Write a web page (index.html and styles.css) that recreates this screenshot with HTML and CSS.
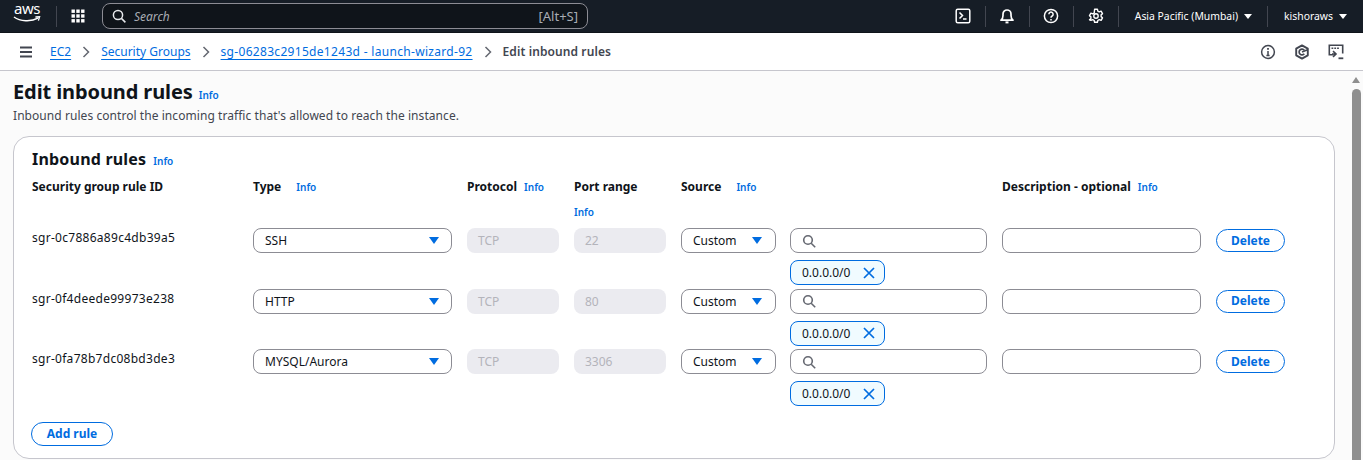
FILE: index.html
```html
<!DOCTYPE html>
<html lang="en">
<head>
<meta charset="utf-8">
<title>Edit inbound rules</title>
<link rel="stylesheet" href="styles.css">
</head>
<body>
<header class="topbar">
  <div class="logo">
    <span class="logo-text">aws</span>
    <svg class="logo-smile" width="28" height="7" viewBox="0 0 28 7"><path d="M1 1C7 5.400 18 6 25 2.200" fill="none" stroke="#fff" stroke-width="1.500"/><path d="M22.400 1l4.200-.2-1.200 3.800" fill="none" stroke="#fff" stroke-width="1.300"/></svg>
  </div>
  <span class="tsep tsep-logo"></span>
  <svg class="grid-icon" width="14" height="14" viewBox="0 0 14 14" fill="#fff"><rect width="3.400" height="3.400" x="0.500" y="0.500"/><rect width="3.400" height="3.400" x="5.300" y="0.500"/><rect width="3.400" height="3.400" x="10.100" y="0.500"/><rect width="3.400" height="3.400" x="0.500" y="5.300"/><rect width="3.400" height="3.400" x="5.300" y="5.300"/><rect width="3.400" height="3.400" x="10.100" y="5.300"/><rect width="3.400" height="3.400" x="0.500" y="10.100"/><rect width="3.400" height="3.400" x="5.300" y="10.100"/><rect width="3.400" height="3.400" x="10.100" y="10.100"/></svg>
  <div class="searchbar">
    <svg width="14" height="14" viewBox="0 0 14 14" fill="none" stroke="#e8eaed" stroke-width="1.500"><circle cx="6" cy="6" r="4.600"/><path d="M9.400 9.400l4 4"/></svg>
    <span class="search-ph">Search</span>
    <span class="search-key">[Alt+S]</span>
  </div>
  <div class="top-right">
    <svg class="ticon ti-cs" width="16" height="16" viewBox="0 0 16 16" fill="none" stroke="#fff" stroke-width="1.500"><rect x="1.200" y="1.200" width="13.600" height="13.600" rx="1.500"/><path d="M4.500 4.500l3 3-3 3M8 11h3.500"/></svg>
    <span class="tsep"></span>
    <svg class="ticon" width="16" height="16" viewBox="0 0 16 16" fill="none" stroke="#fff" stroke-width="1.700"><path d="M2 12.200c1.500-1.200 2-2.500 2-4.700V6a4 4 0 0 1 8 0v1.500c0 2.200.5 3.500 2 4.700z" stroke-linejoin="round"/><path d="M6.500 14.400h3" stroke-width="2"/></svg>
    <span class="tsep"></span>
    <svg class="ticon" width="16" height="16" viewBox="0 0 16 16" fill="none" stroke="#fff" stroke-width="1.500"><circle cx="8" cy="8" r="6.600"/><path d="M5.900 6.200a2.100 2.100 0 1 1 3.200 1.800c-.7.4-1.100.9-1.100 1.800"/><path d="M8 11v1.400"/></svg>
    <span class="tsep"></span>
    <svg class="ticon ti-gear" width="16" height="16" viewBox="0 0 16 16" fill="none" stroke="#fff" stroke-width="1.400"><path d="M6.600 1.200h2.800l.4 1.900 1.500.8 1.800-.7 1.400 2.500-1.400 1.200v1.700l1.400 1.200-1.400 2.500-1.800-.7-1.500.9-.4 1.800H6.600l-.4-1.800-1.500-.9-1.800.7L1.500 11.800l1.400-1.200V8.900L1.500 7.700l1.400-2.500 1.800.7 1.500-.8z" stroke-linejoin="round"/><circle cx="8" cy="8" r="2.200"/></svg>
    <span class="tsep"></span>
    <span class="top-menu top-region">Asia Pacific (Mumbai)<i class="caret-white"></i></span>
    <span class="tsep"></span>
    <span class="top-menu top-user">kishoraws<i class="caret-white"></i></span>
  </div>
</header>

<nav class="crumbbar">
  <svg class="menu-icon" width="14" height="12" viewBox="0 0 14 12" stroke="#424650" stroke-width="2"><path d="M1 1.500h12M1 6h12M1 10.500h12"/></svg>
  <a class="crumb crumb-first">EC2</a>
  <svg class="chev" width="8" height="12" viewBox="0 0 8 12" fill="none" stroke="#656871" stroke-width="1.500"><path d="M1.500 1l5 5-5 5"/></svg>
  <a class="crumb">Security Groups</a>
  <svg class="chev" width="8" height="12" viewBox="0 0 8 12" fill="none" stroke="#656871" stroke-width="1.500"><path d="M1.500 1l5 5-5 5"/></svg>
  <a class="crumb crumb-sg">sg-06283c2915de1243d - launch-wizard-92</a>
  <svg class="chev" width="8" height="12" viewBox="0 0 8 12" fill="none" stroke="#656871" stroke-width="1.500"><path d="M1.500 1l5 5-5 5"/></svg>
  <span class="crumb-current">Edit inbound rules</span>
  <div class="crumb-tools">
    <svg width="16" height="16" viewBox="0 0 16 16" fill="none" stroke="#424650" stroke-width="1.500"><circle cx="8" cy="8" r="6.400"/><path d="M8 7v4.600M6.400 11.600h3.200"/><path d="M8 4v1.800" stroke-width="1.800"/></svg>
    <svg width="16" height="16" viewBox="0 0 16 16" fill="none" stroke="#424650" stroke-width="1.900"><path d="M8 1.400l5.800 3.300v6.600L8 14.600l-5.800-3.300V4.700z" stroke-linejoin="round"/><path d="M10.300 6.200a2.900 2.900 0 1 0 0 3.600" stroke-width="1.700"/><path d="M8 8l5.600-2.200" stroke-width="1.500"/></svg>
    <svg width="16" height="16" viewBox="0 0 16 16" fill="none" stroke="#424650" stroke-width="1.600"><path d="M5.500 10.800H1.300V1.300h13.400v8.200"/><path d="M3.500 4.300h1.800M6.300 4.300h1.800M9.100 4.300h1.800" stroke-width="1.600"/><path d="M5 7.200l3 2.800-3 2.800M4 10h3.500" stroke-width="1.600"/><path d="M10.500 14.300h4.800" stroke-width="1.800"/></svg>
  </div>
</nav>

<div class="body-row">
  <main class="content">
    <div class="page-title">
      <h1>Edit inbound rules</h1>
      <a class="info info-h1">Info</a>
    </div>
    <p class="page-desc">Inbound rules control the incoming traffic that's allowed to reach the instance.</p>

    <section class="card">
      <div class="card-title"><h2>Inbound rules</h2><a class="info">Info</a></div>

      <div class="rule-grid head-grid">
        <div class="col-head">Security group rule ID</div>
        <div class="col-head">Type<a class="info info-wide">Info</a></div>
        <div class="col-head">Protocol<a class="info">Info</a></div>
        <div class="col-head col-port">Port range<a class="info">Info</a></div>
        <div class="col-head">Source<a class="info info-wide">Info</a></div>
        <div></div>
        <div class="col-head">Description - optional<a class="info">Info</a></div>
        <div></div>
      </div>

      <div class="rule-grid rule-row">
        <div class="rule-id">sgr-0c7886a89c4db39a5</div>
        <div class="select"><span>SSH</span><i class="caret-blue"></i></div>
        <div class="field-off">TCP</div>
        <div class="field-off">22</div>
        <div class="select select-src"><span>Custom</span><i class="caret-blue"></i></div>
        <div class="src-col">
          <div class="field-search"><svg width="14" height="14" viewBox="0 0 14 14" fill="none" stroke="#656871" stroke-width="1.600"><circle cx="6" cy="6" r="4.300"/><path d="M9.200 9.200l4 4"/></svg></div>
          <div class="token">0.0.0.0/0<svg width="12" height="12" viewBox="0 0 12 12" fill="none" stroke="#006ce0" stroke-width="1.700"><path d="M1 1l10 10M11 1L1 11"/></svg></div>
        </div>
        <div class="field-text"></div>
        <button class="btn btn-del">Delete</button>
      </div>

      <div class="rule-grid rule-row">
        <div class="rule-id">sgr-0f4deede99973e238</div>
        <div class="select"><span>HTTP</span><i class="caret-blue"></i></div>
        <div class="field-off">TCP</div>
        <div class="field-off">80</div>
        <div class="select select-src"><span>Custom</span><i class="caret-blue"></i></div>
        <div class="src-col">
          <div class="field-search"><svg width="14" height="14" viewBox="0 0 14 14" fill="none" stroke="#656871" stroke-width="1.600"><circle cx="6" cy="6" r="4.300"/><path d="M9.200 9.200l4 4"/></svg></div>
          <div class="token">0.0.0.0/0<svg width="12" height="12" viewBox="0 0 12 12" fill="none" stroke="#006ce0" stroke-width="1.700"><path d="M1 1l10 10M11 1L1 11"/></svg></div>
        </div>
        <div class="field-text"></div>
        <button class="btn btn-del">Delete</button>
      </div>

      <div class="rule-grid rule-row">
        <div class="rule-id">sgr-0fa78b7dc08bd3de3</div>
        <div class="select"><span>MYSQL/Aurora</span><i class="caret-blue"></i></div>
        <div class="field-off">TCP</div>
        <div class="field-off">3306</div>
        <div class="select select-src"><span>Custom</span><i class="caret-blue"></i></div>
        <div class="src-col">
          <div class="field-search"><svg width="14" height="14" viewBox="0 0 14 14" fill="none" stroke="#656871" stroke-width="1.600"><circle cx="6" cy="6" r="4.300"/><path d="M9.200 9.200l4 4"/></svg></div>
          <div class="token">0.0.0.0/0<svg width="12" height="12" viewBox="0 0 12 12" fill="none" stroke="#006ce0" stroke-width="1.700"><path d="M1 1l10 10M11 1L1 11"/></svg></div>
        </div>
        <div class="field-text"></div>
        <button class="btn btn-del">Delete</button>
      </div>

      <button class="btn btn-add">Add rule</button>
    </section>
  </main>
  <aside class="scrollbar">
    <i class="scroll-up"></i>
    <i class="scroll-thumb"></i>
  </aside>
</div>
</body>
</html>
```

FILE: styles.css
```css
* { box-sizing: border-box; }
html, body { height: 100%; }
body {
  margin: 0;
  height: 460px;
  overflow: hidden;
  display: flex;
  flex-direction: column;
  background: #fbfbfb;
  color: #0f141a;
  font-family: "Noto Sans", "Open Sans", sans-serif;
  font-size: 12px;
}
a { color: #006ce0; }

/* Top bar */
.topbar {
  flex: none;
  height: 33px;
  background: #161d26;
  border-bottom: 1px solid #0f141a;
  display: flex;
  align-items: center;
  padding-left: 9px;
  color: #fff;
}
.logo { width: 36px; height: 26px; display: flex; flex-direction: column; align-items: center; margin-top: -5px; }
.logo-text { font-size: 15px; line-height: 15px; color: #fff; letter-spacing: -0.400px; }
.logo-smile { margin-top: 0; flex: none; }
.tsep { flex: none; width: 1px; height: 21px; background: #424650; }
.tsep-logo { margin-left: 11px; }
.grid-icon { margin-left: 14px; flex: none; }
.searchbar {
  margin-left: 17px;
  width: 486px;
  height: 26px;
  border: 1px solid #8c8c94;
  border-radius: 8px;
  background: #0f141a;
  display: flex;
  align-items: center;
  padding: 0 9px 0 9px;
}
.search-ph { margin-left: 8px; font-style: italic; font-size: 12px; color: #a8acb3; }
.search-key { margin-left: auto; font-size: 13px; color: #a8acb3; }
.top-right { margin-left: auto; display: flex; align-items: center; height: 100%; }
.ticon { flex: none; margin: 0 14px 0 13px; }
.ti-cs { margin-left: 0; }
.ti-gear { margin-left: 14px; }
.top-menu { display: flex; align-items: center; font-size: 10.400px; color: #fff; white-space: nowrap; }
.top-region { padding: 0 15px 0 16px; }
.top-user { padding: 0 16px 0 16px; }
.caret-white { width: 0; height: 0; margin-left: 6px; border: 4px solid transparent; border-top: 5px solid #fff; border-bottom: 0; }

/* Breadcrumbs */
.crumbbar {
  flex: none;
  height: 38px;
  background: #fff;
  border-bottom: 1px solid #c6c6cd;
  display: flex;
  align-items: center;
  padding-left: 19px;
  font-size: 12px;
}
.menu-icon { flex: none; margin-right: 17px; }
.crumb { color: #006ce0; text-decoration: underline; text-underline-offset: 3px; white-space: nowrap; }
.crumb-sg { letter-spacing: 0.310px; }
.crumb-current { color: #424650; font-weight: 600; white-space: nowrap; letter-spacing: 0.100px; }
.chev { flex: none; margin: 0 11px; }
.crumb-tools { margin-left: auto; margin-right: 19px; display: flex; gap: 18px; align-items: center; }

/* Page */
.body-row { flex: 1; min-height: 0; display: flex; }
.content { flex: 1; min-width: 0; padding: 8px 14px 0 13px; }
.page-title { display: flex; align-items: baseline; gap: 6px; height: 26px; }
h1 { margin: 0; font-size: 20px; line-height: 26px; font-weight: 700; color: #0f141a; letter-spacing: -0.100px; }
.page-desc { margin: 2px 0 0; font-size: 12px; line-height: 17px; color: #424650; letter-spacing: 0.060px; }
.info { font-size: 10px; font-weight: 600; color: #006ce0; text-decoration: none; margin-left: 7px; }
.info-h1 { margin-left: 0; }
.info-wide { margin-left: 15px; }

/* Card */
.card {
  margin-top: 12px;
  height: 323px;
  background: #fff;
  border: 1px solid #c6c6cd;
  border-radius: 16px;
  padding: 12px 18px 0;
}
.card-title { display: flex; align-items: baseline; height: 20px; }
h2 { margin: 0; font-size: 16px; line-height: 20px; font-weight: 700; letter-spacing: 0.200px; }
.rule-grid {
  display: grid;
  grid-template-columns: 206px 199px 92px 92px 94px 197px 199px 69px;
  column-gap: 15px;
}
.head-grid { margin-top: 9px; height: 50px; }
.col-head { font-size: 12px; line-height: 17px; font-weight: 700; white-space: nowrap; }
.col-port { display: flex; flex-direction: column; row-gap: 9px; }
.col-port .info { margin-left: 0; }
.rule-row { height: 60.500px; align-items: start; }
.rule-id { font-size: 12px; line-height: 17px; margin-top: 1px; letter-spacing: 0.280px; white-space: nowrap; }
.select, .field-off, .field-text, .field-search { height: 25px; border-radius: 8px; }
.select {
  display: flex;
  align-items: center;
  justify-content: space-between;
  border: 1px solid #8c8c94;
  background: #fff;
  padding: 0 12px 0 11px;
}
.select-src { padding-right: 13px; margin-right: -1px; }
.caret-blue { width: 0; height: 0; border: 5px solid transparent; border-top: 7px solid #006ce0; border-bottom: 0; }
.field-off {
  background: #ebebf0;
  color: #b4b4bb;
  padding: 0 11px;
  display: flex;
  align-items: center;
}
.field-text, .field-search { border: 1px solid #8c8c94; background: #fff; }
.field-search { display: flex; align-items: center; padding-left: 11px; }
.token {
  margin-top: 7px;
  width: 95px;
  height: 25px;
  border: 1px solid #006ce0;
  border-radius: 8px;
  background: #f0fbff;
  display: flex;
  align-items: center;
  justify-content: space-between;
  padding: 0 9px 0 11px;
}
.btn {
  border: 1px solid #006ce0;
  border-radius: 20px;
  background: #fff;
  color: #006ce0;
  font: 700 12px/1 "Noto Sans", "Open Sans", sans-serif;
  padding: 0;
}
.btn-del { height: 23px; margin-top: 1px; }
.btn-add { display: block; width: 82px; height: 24px; margin: 12px 0 0 -1px; }

/* Scrollbar */
.scrollbar { flex: none; width: 14px; position: relative; }
.scroll-up { position: absolute; top: 6px; left: 3px; width: 0; height: 0; border: 4.500px solid transparent; border-bottom: 6px solid #8f8f8f; border-top: 0; }
.scroll-thumb { position: absolute; top: 18px; bottom: 0; left: 3px; width: 9px; background: #8f8f8f; border-radius: 5px 5px 0 0; }
```
